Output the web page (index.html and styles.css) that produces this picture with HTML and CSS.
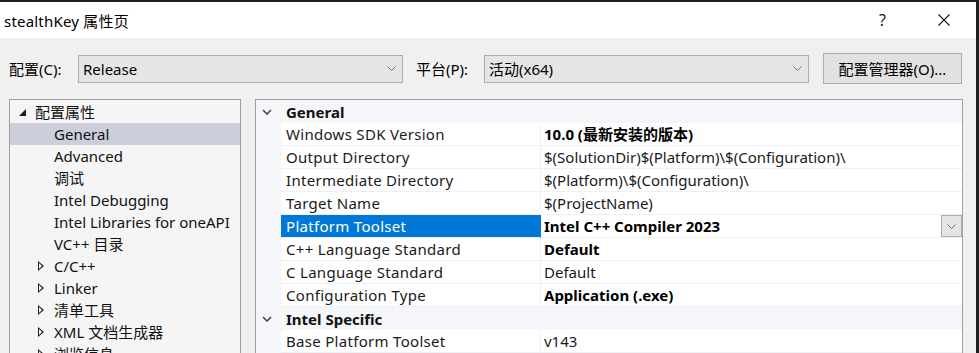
FILE: index.html
```html
<!DOCTYPE html>
<html lang="zh-CN">
<head>
    <meta charset="UTF-8">
    <title>stealthKey 属性页</title>
    <link rel="stylesheet" href="styles.css">
</head>
<body>
    <div class="window">
        <div class="titlebar">
            <span class="title">stealthKey 属性页</span>
            <span class="help">?</span>
            <span class="close">
                <svg width="12" height="12" viewBox="0 0 12 12"><path d="M0.5 0.5 L11.5 11.5 M11.5 0.5 L0.5 11.5" stroke="#1a1a1a" stroke-width="1.1" fill="none"/></svg>
            </span>
        </div>

        <div class="content">
            <div class="toolbar">
                <label class="tb-label">配置(C):</label>
                <div class="combo combo-config">
                    <span>Release</span>
                    <svg class="chev" width="9" height="5" viewBox="0 0 9 5"><path d="M0.5 0.5 L4.5 4.5 L8.5 0.5" stroke="#707070" fill="none"/></svg>
                </div>
                <label class="tb-label tb-label-2">平台(P):</label>
                <div class="combo combo-platform">
                    <span>活动(x64)</span>
                    <svg class="chev" width="9" height="5" viewBox="0 0 9 5"><path d="M0.5 0.5 L4.5 4.5 L8.5 0.5" stroke="#707070" fill="none"/></svg>
                </div>
                <button class="btn-manager">配置管理器(O)...</button>
            </div>

            <div class="panes">
                <div class="tree">
                    <div class="tree-row root"><span class="exp exp-open"></span>配置属性</div>
                    <div class="tree-row child selected">General</div>
                    <div class="tree-row child">Advanced</div>
                    <div class="tree-row child">调试</div>
                    <div class="tree-row child">Intel Debugging</div>
                    <div class="tree-row child">Intel Libraries for oneAPI</div>
                    <div class="tree-row child">VC++ 目录</div>
                    <div class="tree-row child"><span class="exp exp-closed"></span>C/C++</div>
                    <div class="tree-row child"><span class="exp exp-closed"></span>Linker</div>
                    <div class="tree-row child"><span class="exp exp-closed"></span>清单工具</div>
                    <div class="tree-row child"><span class="exp exp-closed"></span>XML 文档生成器</div>
                    <div class="tree-row child"><span class="exp exp-closed"></span>浏览信息</div>
                </div>

                <div class="grid">
                    <div class="cat-row">
                        <span class="gutter"><svg width="10" height="6" viewBox="0 0 10 6"><path d="M1 1 L5 5 L9 1" stroke="#444" stroke-width="1.6" fill="none"/></svg></span>
                        <span class="cat-name">General</span>
                    </div>
                    <div class="prop-row">
                        <span class="gutter"></span>
                        <span class="name">Windows SDK Version</span>
                        <span class="value bold">10.0 (最新安装的版本)</span>
                    </div>
                    <div class="prop-row">
                        <span class="gutter"></span>
                        <span class="name">Output Directory</span>
                        <span class="value">$(SolutionDir)$(Platform)\$(Configuration)\</span>
                    </div>
                    <div class="prop-row">
                        <span class="gutter"></span>
                        <span class="name">Intermediate Directory</span>
                        <span class="value">$(Platform)\$(Configuration)\</span>
                    </div>
                    <div class="prop-row">
                        <span class="gutter"></span>
                        <span class="name">Target Name</span>
                        <span class="value">$(ProjectName)</span>
                    </div>
                    <div class="prop-row active">
                        <span class="gutter"></span>
                        <span class="name">Platform Toolset</span>
                        <span class="value bold">Intel C++ Compiler 2023
                            <span class="drop"><svg width="9" height="5" viewBox="0 0 9 5"><path d="M0.5 0.5 L4.5 4.5 L8.5 0.5" stroke="#707070" fill="none"/></svg></span>
                        </span>
                    </div>
                    <div class="prop-row">
                        <span class="gutter"></span>
                        <span class="name">C++ Language Standard</span>
                        <span class="value bold">Default</span>
                    </div>
                    <div class="prop-row">
                        <span class="gutter"></span>
                        <span class="name">C Language Standard</span>
                        <span class="value">Default</span>
                    </div>
                    <div class="prop-row">
                        <span class="gutter"></span>
                        <span class="name">Configuration Type</span>
                        <span class="value bold">Application (.exe)</span>
                    </div>
                    <div class="cat-row">
                        <span class="gutter"><svg width="10" height="6" viewBox="0 0 10 6"><path d="M1 1 L5 5 L9 1" stroke="#444" stroke-width="1.6" fill="none"/></svg></span>
                        <span class="cat-name">Intel Specific</span>
                    </div>
                    <div class="prop-row">
                        <span class="gutter"></span>
                        <span class="name">Base Platform Toolset</span>
                        <span class="value">v143</span>
                    </div>
                </div>
            </div>
        </div>
    </div>
</body>
</html>
```

FILE: styles.css
```css
html, body {
    margin: 0;
    padding: 0;
    overflow: hidden;
}
body {
    font-family: "Noto Sans", "Noto Sans CJK SC", sans-serif;
    font-size: 15px;
    color: #000;
    background-color: #1f1f1f;
}
.window {
    width: 976px;
    height: 351px;
    margin-top: 2px;
    background-color: #f0f0f0;
    overflow: hidden;
}
.titlebar {
    height: 36px;
    background-color: #fff;
    display: flex;
    align-items: center;
}
.title {
    margin-left: 4px;
    flex: 1;
    letter-spacing: 0.2px;
}
.help {
    width: 14px;
    font-size: 16px;
    color: #222;
    margin-right: 45px;
}
.close {
    display: flex;
    margin-right: 26px;
}
.content {
    padding-left: 9px;
}
.toolbar {
    display: flex;
    align-items: center;
    padding-top: 15px;
    height: 31px;
}
.tb-label {
    width: 69px;
}
.tb-label-2 {
    margin-left: 13px;
    width: 68px;
}
.combo {
    box-sizing: border-box;
    height: 28px;
    width: 325px;
    border: 1px solid #adadad;
    background-color: #e5e5e5;
    display: flex;
    align-items: center;
    padding-left: 4px;
    padding-right: 6px;
}
.combo span {
    flex: 1;
}
.btn-manager {
    box-sizing: border-box;
    margin-left: 14px;
    width: 139px;
    height: 31px;
    border: 1px solid #adadad;
    background-color: #e1e1e1;
    font-family: inherit;
    font-size: 15px;
    color: #000;
    padding: 0;
}
.panes {
    display: flex;
    margin-top: 15px;
    gap: 14px;
}
.tree {
    box-sizing: border-box;
    width: 232px;
    height: 260px;
    border: 1px solid #a0a0a0;
    background-color: #f5f5f5;
    padding-top: 1px;
}
.tree-row {
    height: 22px;
    line-height: 22px;
    display: flex;
    align-items: center;
    white-space: nowrap;
    color: #111;
}
.tree-row.root {
    padding-left: 9px;
}
.tree-row.child {
    padding-left: 44px;
    position: relative;
}
.tree-row.selected {
    background-color: #cccedb;
}
.exp {
    display: inline-block;
    width: 0;
    height: 0;
}
.exp-open {
    border-left: 7px solid transparent;
    border-bottom: 7px solid #1e1e1e;
    margin-right: 9px;
    margin-top: 1px;
}
.exp-closed {
    position: absolute;
    left: 28px;
    top: 6px;
    width: 5px;
    height: 9px;
}
.exp-closed::before {
    content: "";
    position: absolute;
    left: 0;
    top: 0;
    border-top: 5px solid transparent;
    border-bottom: 5px solid transparent;
    border-left: 6px solid #1e1e1e;
}
.exp-closed::after {
    content: "";
    position: absolute;
    left: 1px;
    top: 2px;
    border-top: 3px solid transparent;
    border-bottom: 3px solid transparent;
    border-left: 3.5px solid #f5f5f5;
}
.grid {
    box-sizing: border-box;
    width: 708px;
    height: 260px;
    border: 1px solid #a0a0a0;
    background-color: #f4f6fa;
}
.cat-row {
    display: flex;
    height: 23px;
    align-items: center;
    font-weight: bold;
}
.gutter {
    width: 25px;
    flex-shrink: 0;
    display: flex;
    justify-content: center;
    padding-right: 3px;
    box-sizing: border-box;
}
.cat-name {
    padding-left: 5px;
    color: #111;
}
.prop-row {
    display: flex;
    height: 23px;
}
.prop-row .name,
.prop-row .value {
    box-sizing: border-box;
    height: 23px;
    line-height: 22px;
    border-bottom: 1px solid #edf0f5;
    background-color: #fff;
    white-space: nowrap;
    color: #1a1a1a;
}
.prop-row .name {
    width: 260px;
    padding-left: 5px;
    border-right: 1px solid #edf0f5;
    letter-spacing: 0.3px;
}
.prop-row .value {
    flex: 1;
    padding-left: 3px;
    display: flex;
}
.value.bold {
    font-weight: bold;
    color: #000;
}
.prop-row.active .name {
    background-color: #0078d7;
    color: #fff;
    border-right-color: #0078d7;
}
.drop {
    margin-left: auto;
    box-sizing: border-box;
    width: 21px;
    height: 22px;
    border: 1px solid #acacac;
    background-color: #e5e5e5;
    display: flex;
    align-items: center;
    justify-content: center;
}
```
